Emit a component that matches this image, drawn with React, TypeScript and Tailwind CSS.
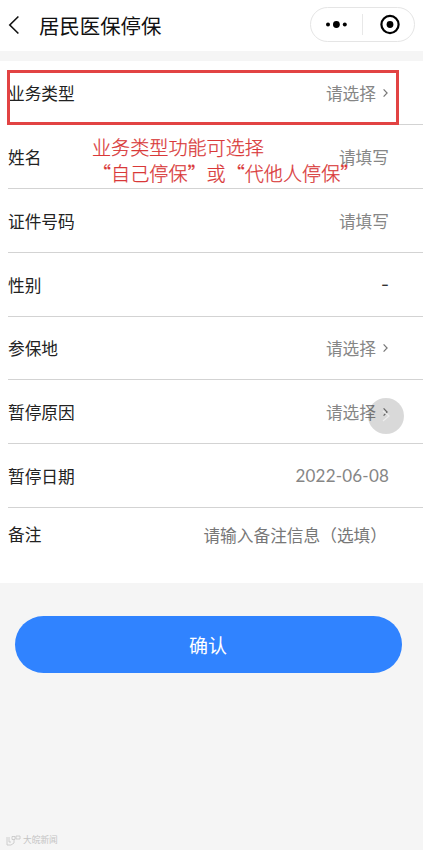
import type { ReactNode } from 'react';

function Chevron() {
  return (
    <svg className="ml-[6px] h-[10px] w-[7px] shrink-0" viewBox="0 0 7 10" fill="none">
      <path d="M1.6 1.3 5.1 5 1.6 8.7" stroke="#777" strokeWidth="1.2" />
    </svg>
  );
}

function Row({ label, children, height = 'h-16' }: { label: string; children: ReactNode; height?: string }) {
  return (
    <div className={`ml-2 flex items-center justify-between border-b border-[#d3d3d3] pr-[34px] ${height}`}>
      <span className="text-[#222]">{label}</span>
      <span className="flex items-center text-[#868686]">{children}</span>
    </div>
  );
}

export default function App() {
  return (
    <div className="relative flex h-[850px] w-full flex-col overflow-hidden bg-[#f5f5f5] font-['Noto_Sans_CJK_SC',sans-serif] text-[16.7px] leading-6">
      <header className="flex h-[51px] shrink-0 items-center bg-white pl-2 pr-2">
        <svg className="-mt-[2px] h-5 w-3" viewBox="0 0 12 20" fill="none">
          <path d="M10.4 1.5 1.8 10l8.6 8.5" stroke="#111" strokeWidth="1.6" />
        </svg>
        <h1 className="-mt-[2px] ml-[19px] text-[20.4px] leading-7 text-[#111]">居民医保停保</h1>
        <div className="-mt-[2px] ml-auto flex h-[35px] w-[105px] items-center rounded-full border border-[#e5e5e5]">
          <svg className="h-full w-full" viewBox="0 0 103 33">
            <circle cx="17" cy="16.5" r="2" />
            <circle cx="25.4" cy="16.5" r="3.4" />
            <circle cx="33.8" cy="16.5" r="2" />
            <path d="M51.5 6v21" stroke="#e8e8e8" />
            <circle cx="79" cy="16.5" r="8.6" fill="none" stroke="#000" strokeWidth="2.2" />
            <circle cx="79" cy="16.5" r="3.4" />
          </svg>
        </div>
      </header>

      <main className="mt-[10px] h-[522px] shrink-0 bg-white">
        <Row label="业务类型">请选择<Chevron /></Row>
        <Row label="姓名">请填写</Row>
        <Row label="证件号码">请填写</Row>
        <Row label="性别"><span className="inline-block scale-x-125 pb-[3px] pr-px font-medium text-[#333]">-</span></Row>
        <Row label="参保地" height="h-[63px]">请选择<Chevron /></Row>
        <Row label="暂停原因">请选择<Chevron /></Row>
        <Row label="暂停日期">
          <span className="font-['Lato',sans-serif] text-[17px] tracking-[0.2px]">2022-06-08</span>
        </Row>
        <div className="ml-2 flex justify-between pr-[36px] pt-[14px]">
          <span className="text-[#222]">备注</span>
          <span className="pt-px text-[#777]">请输入备注信息（选填）</span>
        </div>
      </main>

      <button className="ml-[15px] mt-[33px] h-[57px] w-[387px] shrink-0 rounded-full bg-[#3083ff] pr-px text-[19px] text-white">
        确认
      </button>

      <footer className="mt-auto flex h-5 items-center pl-[6px] text-[#c4c4c4]">
        <svg className="h-[11px] w-4" viewBox="0 0 16 11" fill="none" stroke="currentColor" strokeWidth="0.8">
          <path d="M1 2v8h4l3-2V5M3 2v5h2M6 1.5h3v3H6zM10 1h4v3h-4z" />
        </svg>
        <span className="ml-px text-[8.7px] leading-3">大皖新闻</span>
      </footer>

      <div className="absolute left-[7px] top-[70px] h-[55px] w-[392px] border-[3px] border-[#e24343]" />
      <p className="absolute left-[92px] top-[134px] whitespace-nowrap text-[19.1px] font-light leading-[26px] text-[#d93838] [-webkit-text-stroke:0.25px_#d93838]">
        业务类型功能可选择<br />“自己停保”或“代他人停保”
      </p>
      <div className="absolute left-[368px] top-[398px] flex h-9 w-9 items-center justify-center rounded-full bg-black/15">
        <svg className="h-3 w-2" viewBox="0 0 8 12" fill="none">
          <path d="m1 1 6 5-6 5" stroke="#eee" strokeWidth="1.2" />
        </svg>
      </div>
    </div>
  );
}
